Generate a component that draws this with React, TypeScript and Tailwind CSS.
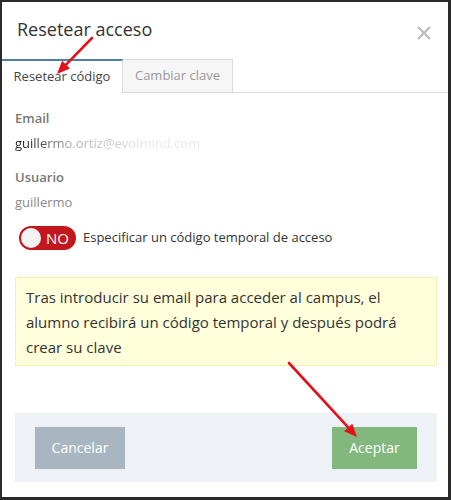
import React from "react";

function Arrow({ x1, y1, x2, y2 }: { x1: number; y1: number; x2: number; y2: number }) {
  const ang = Math.atan2(y2 - y1, x2 - x1);
  const len = 13;
  const w = 5.5;
  const bx = x2 - len * Math.cos(ang);
  const by = y2 - len * Math.sin(ang);
  const px = -Math.sin(ang) * w;
  const py = Math.cos(ang) * w;
  return (
    <g>
      <line x1={x1} y1={y1} x2={bx} y2={by} stroke="#e3121a" strokeWidth={2.6} strokeLinecap="round" />
      <polygon points={`${x2},${y2} ${bx + px},${by + py} ${bx - px},${by - py}`} fill="#e3121a" />
    </g>
  );
}

export default function App() {
  return (
    <div
      className="relative w-[451px] h-[500px] bg-[#2a2a2a] pt-[2px] pl-[2px] pr-[3px] pb-[3px]"
      style={{ fontFamily: '"Open Sans", "Noto Sans", sans-serif' }}
    >
      <div className="flex flex-col h-full bg-white">
        <div className="flex items-start justify-between h-[57px] pt-[14px] pl-[15px] pr-[16px]">
          <h1 className="text-[18px] leading-[26px] text-[#333]">Resetear acceso</h1>
          <svg width="16" height="16" viewBox="0 0 16 16" className="mt-[9px]">
            <path d="M2 2 L14 14 M14 2 L2 14" stroke="#bdbdbd" strokeWidth="2.4" />
          </svg>
        </div>
        <div className="flex h-[34px]">
          <div className="w-[121px] border-t-2 border-t-[#4d7fa6] border-r border-r-[#dcdcdc] flex items-center justify-center text-[13px] text-[#444]">
            Resetear código
          </div>
          <div className="w-[110px] border border-[#dcdcdc] border-l-0 bg-[#f6f6f6] flex items-center justify-center text-[13px] text-[#999]">
            Cambiar clave
          </div>
          <div className="flex-1 border-b border-[#dcdcdc]" />
        </div>
        <div className="flex flex-col pl-[13px] pr-[11px] pt-[15px]">
          <div className="text-[13px] leading-[20px] font-semibold text-[#777]">Email</div>
          <div className="mt-[5px] text-[13px] leading-[20px]">
            <span className="inline-block bg-linear-to-r from-[#222] from-[6%] via-[#aaa] via-[30%] to-[#e6e6e6] to-[70%] bg-clip-text text-transparent">
              guillermo.ortiz@evolmind.com
            </span>
          </div>
          <div className="mt-[14px] text-[13px] leading-[20px] font-semibold text-[#777]">Usuario</div>
          <div className="mt-[5px] text-[13px] leading-[20px] text-[#8a8a8a]">guillermo</div>
          <div className="mt-[14px] flex items-center h-[24px] pl-[4px]">
            <div className="flex items-center w-[57px] h-[24px] rounded-full bg-[#c3171d] pl-[2px]">
              <div className="w-[20px] h-[20px] rounded-full bg-[#f4f4f4]" />
              <span className="ml-[5px] text-[15px] text-white leading-none">NO</span>
            </div>
            <span className="ml-[7px] text-[13px] text-[#333]">Especificar un código temporal de acceso</span>
          </div>
          <div className="mt-[27px] h-[89px] bg-[#ffffdc] border border-dotted border-[#e2e29a] pl-[10px] pt-[7px] text-[15px] leading-[25px] text-[#333]">
            Tras introducir su email para acceder al campus, el alumno recibirá un código temporal y después podrá crear su clave
          </div>
          <div className="mt-[47px] h-[69px] bg-[#eef1f5] flex items-center justify-between px-[20px]">
            <button className="w-[90px] h-[42px] bg-[#a9b6c1] text-white text-[14px]">Cancelar</button>
            <button className="w-[85px] h-[42px] bg-[#82b77d] text-white text-[14px]">Aceptar</button>
          </div>
        </div>
      </div>
      <svg className="absolute inset-0 pointer-events-none" width="451" height="500">
        <Arrow x1={92} y1={38} x2={57} y2={74} />
        <Arrow x1={289} y1={363} x2={357} y2={437} />
      </svg>
    </div>
  );
}
